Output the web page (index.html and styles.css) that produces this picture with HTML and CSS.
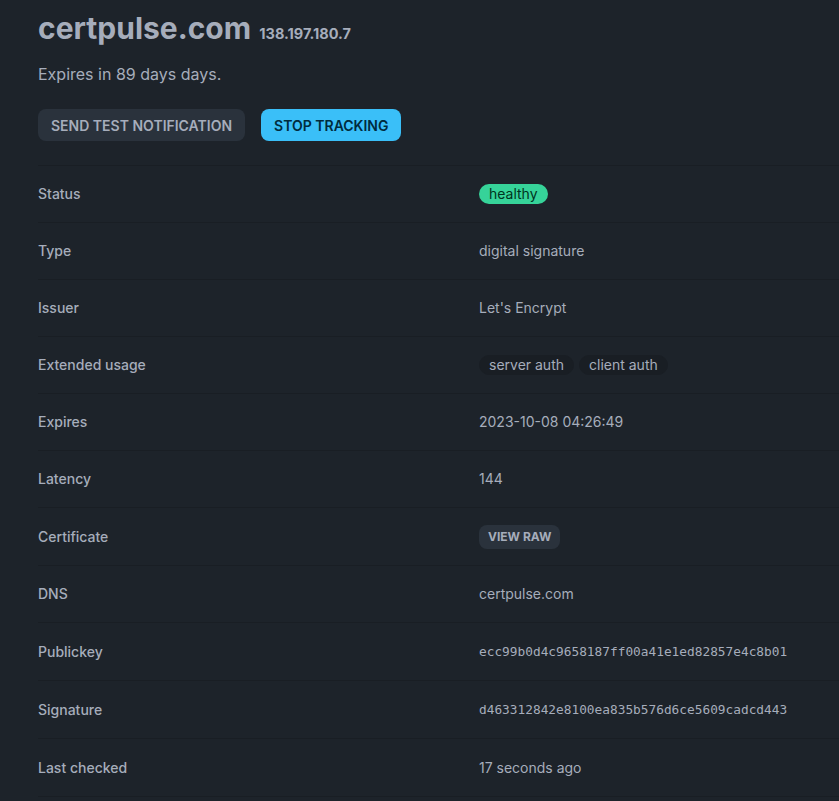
FILE: index.html
```html
<!DOCTYPE html>
<html lang="en">
<head>
<meta charset="utf-8">
<title>certpulse.com</title>
<link rel="stylesheet" href="styles.css">
</head>
<body>
<main class="page">
  <h1 class="title">certpulse.com <span class="ip">138.197.180.7</span></h1>
  <p class="expires">Expires in 89 days days.</p>
  <div class="actions">
    <button class="btn btn-neutral">Send test notification</button>
    <button class="btn btn-info">Stop tracking</button>
  </div>
  <div class="table">
    <div class="row"><div class="label">Status</div><div class="value"><span class="badge badge-success">healthy</span></div></div>
    <div class="row"><div class="label">Type</div><div class="value">digital signature</div></div>
    <div class="row"><div class="label">Issuer</div><div class="value">Let's Encrypt</div></div>
    <div class="row"><div class="label">Extended usage</div><div class="value badges"><span class="badge badge-ghost">server auth</span><span class="badge badge-ghost">client auth</span></div></div>
    <div class="row"><div class="label">Expires</div><div class="value">2023-10-08 04:26:49</div></div>
    <div class="row"><div class="label">Latency</div><div class="value">144</div></div>
    <div class="row tall"><div class="label">Certificate</div><div class="value"><button class="btn-xs">View raw</button></div></div>
    <div class="row"><div class="label">DNS</div><div class="value">certpulse.com</div></div>
    <div class="row tall"><div class="label">Publickey</div><div class="value mono">ecc99b0d4c9658187ff00a41e1ed82857e4c8b01</div></div>
    <div class="row tall"><div class="label">Signature</div><div class="value mono">d463312842e8100ea835b576d6ce5609cadcd443</div></div>
    <div class="row tall"><div class="label">Last checked</div><div class="value">17 seconds ago</div></div>
  </div>
</main>
</body>
</html>
```
FILE: styles.css
```css
html, body {
  margin: 0;
  padding: 0;
  background: #1d232a;
  color: #a6adbb;
  font-family: Inter, "Noto Sans", sans-serif;
}
.page {
  padding: 8px 0 0 38px;
}
.title {
  margin: 0;
  font-size: 30px;
  line-height: 40px;
  font-weight: 700;
}
.ip {
  font-size: 14.5px;
  font-weight: 700;
  margin-left: 1px;
}
.expires {
  margin: 8px 0 0;
  font-size: 16px;
  line-height: 24px;
}
.actions {
  display: flex;
  gap: 16px;
  margin-top: 23px;
}
.btn {
  height: 32px;
  padding: 0 13px;
  border: none;
  border-radius: 8px;
  font-family: inherit;
  font-size: 14px;
  font-weight: 600;
  text-transform: uppercase;
}
.btn-neutral {
  background: #2a323c;
  color: #a6adbb;
}
.btn-info {
  background: #3abff8;
  color: #002b3d;
}
.table {
  margin-top: 24px;
  border-top: 1px solid #191e24;
}
.row {
  display: grid;
  grid-template-columns: 441px 1fr;
  align-items: center;
  height: 56px;
  border-bottom: 1px solid #191e24;
  font-size: 14px;
  line-height: 20px;
}
.row.tall {
  height: 57px;
}
.label {
  font-weight: 500;
}
.badges {
  display: flex;
  gap: 5px;
}
.badge {
  display: inline-flex;
  align-items: center;
  height: 20px;
  padding: 0 10px;
  border-radius: 10px;
  font-size: 14px;
  box-sizing: border-box;
}
.badge-success {
  background: #36d399;
  color: #003320;
}
.badge-ghost {
  background: #191e24;
  border: 1px solid #191e24;
  color: #a6adbb;
  padding: 0 9px;
}
.btn-xs {
  height: 24px;
  padding: 0 9px;
  border: none;
  border-radius: 8px;
  background: #2a323c;
  color: #a6adbb;
  font-family: inherit;
  font-size: 12px;
  font-weight: 700;
  text-transform: uppercase;
}
.mono {
  font-family: "DejaVu Sans Mono", monospace;
  font-size: 12.8px;
}
```
